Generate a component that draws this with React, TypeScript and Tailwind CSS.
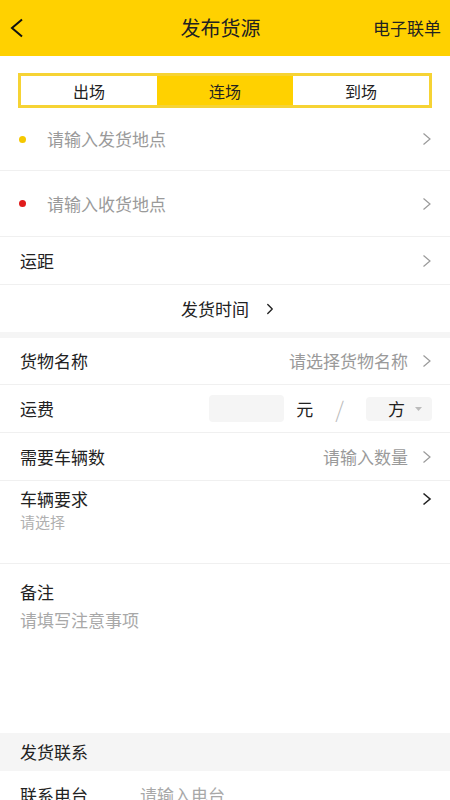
import { ChevronRight } from 'lucide-react';

const font = { fontFamily: '"Noto Sans CJK SC", "Noto Sans", sans-serif' };

function Arrow({ dark = false }: { dark?: boolean }) {
  return (
    <svg width="10" height="14" viewBox="0 0 10 14" fill="none" className="shrink-0">
      <path d="M1.5 1.5 L8 7 L1.5 12.5" stroke={dark ? '#222' : '#9a9a9a'} strokeWidth={dark ? 1.6 : 1.2} />
    </svg>
  );
}

function Row({ label, placeholder, h }: { label: string; placeholder?: string; h: string }) {
  return (
    <div className={`flex items-center justify-between pl-5 pr-[18px] border-b border-[#f0f0f0] ${h}`}>
      <span className="text-[17px] text-[#222]">{label}</span>
      <div className="flex items-center gap-[14px]">
        {placeholder && <span className="text-[17px] text-[#9a9a9a]">{placeholder}</span>}
        <Arrow />
      </div>
    </div>
  );
}

export default function App() {
  return (
    <div className="w-[450px] h-[800px] overflow-hidden bg-white" style={font}>
      {/* Header */}
      <div className="h-[56px] bg-[#ffd100] flex items-center justify-between pl-[10px] pr-[9px]">
        <svg width="14" height="20" viewBox="0 0 14 20" fill="none">
          <path d="M12 1.5 L2 10 L12 18.5" stroke="#111" strokeWidth="2" />
        </svg>
        <span className="text-[20px] text-[#222] ml-[44px]">发布货源</span>
        <span className="text-[17px] text-[#222]">电子联单</span>
      </div>

      {/* Segments */}
      <div className="pt-[17px] px-[18px]">
        <div className="flex h-[35px] border-[3px] border-[#f6d334]">
          <div className="flex-1 flex items-center justify-center text-[16px] text-[#222]">出场</div>
          <div className="flex-1 flex items-center justify-center text-[16px] text-[#222] bg-[#ffd100]">连场</div>
          <div className="flex-1 flex items-center justify-center text-[16px] text-[#222]">到场</div>
        </div>
      </div>

      {/* Addresses */}
      <div className="flex items-center h-[63px] pl-[19px] pr-[18px] border-b border-[#f0f0f0]">
        <span className="w-[7px] h-[7px] rounded-full bg-[#f5c800]" />
        <span className="ml-[21px] flex-1 text-[17px] text-[#9a9a9a]">请输入发货地点</span>
        <Arrow />
      </div>
      <div className="flex items-center h-[66px] pl-[19px] pr-[18px] border-b border-[#f0f0f0]">
        <span className="w-[7px] h-[7px] rounded-full bg-[#e01b1b]" />
        <span className="ml-[21px] flex-1 text-[17px] text-[#9a9a9a]">请输入收货地点</span>
        <Arrow />
      </div>
      <Row label="运距" h="h-[48px]" />
      <div className="h-[47px] flex items-center justify-center gap-[12px] pl-[10px]">
        <span className="text-[17px] text-[#222]">发货时间</span>
        <ChevronRight className="w-[18px] h-[18px] text-[#222]" strokeWidth={1.8} />
      </div>
      <div className="h-[6px] bg-[#f5f5f5]" />

      {/* Cargo */}
      <Row label="货物名称" placeholder="请选择货物名称" h="h-[47px]" />
      <div className="flex items-center h-[48px] pl-5 pr-[18px] border-b border-[#f0f0f0]">
        <span className="flex-1 text-[17px] text-[#222]">运费</span>
        <div className="w-[75px] h-[27px] rounded-[4px] bg-[#f5f5f5]" />
        <span className="ml-[12px] text-[17px] text-[#222]">元</span>
        <span className="ml-[22px] text-[22px] text-[#bbb] font-light">/</span>
        <div className="ml-[22px] w-[66px] h-[24px] rounded-[4px] bg-[#f5f5f5] flex items-center justify-end pr-[10px] gap-[10px]">
          <span className="text-[17px] text-[#222]">方</span>
          <svg width="7" height="4" viewBox="0 0 7 4"><path d="M0 0 H7 L3.5 4 Z" fill="#bbb" /></svg>
        </div>
      </div>
      <Row label="需要车辆数" placeholder="请输入数量" h="h-[48px]" />
      <div className="h-[83px] pl-5 pr-[18px] pt-[5px] border-b border-[#f0f0f0]">
        <div className="flex items-center justify-between">
          <span className="text-[17px] text-[#222]">车辆要求</span>
          <Arrow dark />
        </div>
        <div className="mt-[-1px] text-[15px] text-[#b0b0b0]">请选择</div>
      </div>

      {/* Remark */}
      <div className="h-[169px] pl-5 pt-[15px]">
        <div className="text-[17px] text-[#222]">备注</div>
        <div className="mt-[2px] text-[17px] text-[#a8a8a8]">请填写注意事项</div>
      </div>

      {/* Contact */}
      <div className="h-[38px] bg-[#f5f5f5] flex items-center pl-5">
        <span className="text-[17px] text-[#222]">发货联系</span>
      </div>
      <div className="h-[48px] flex items-center pl-5">
        <span className="w-[120px] text-[17px] text-[#222]">联系电台</span>
        <span className="text-[17px] text-[#a8a8a8]">请输入电台</span>
      </div>
    </div>
  );
}
